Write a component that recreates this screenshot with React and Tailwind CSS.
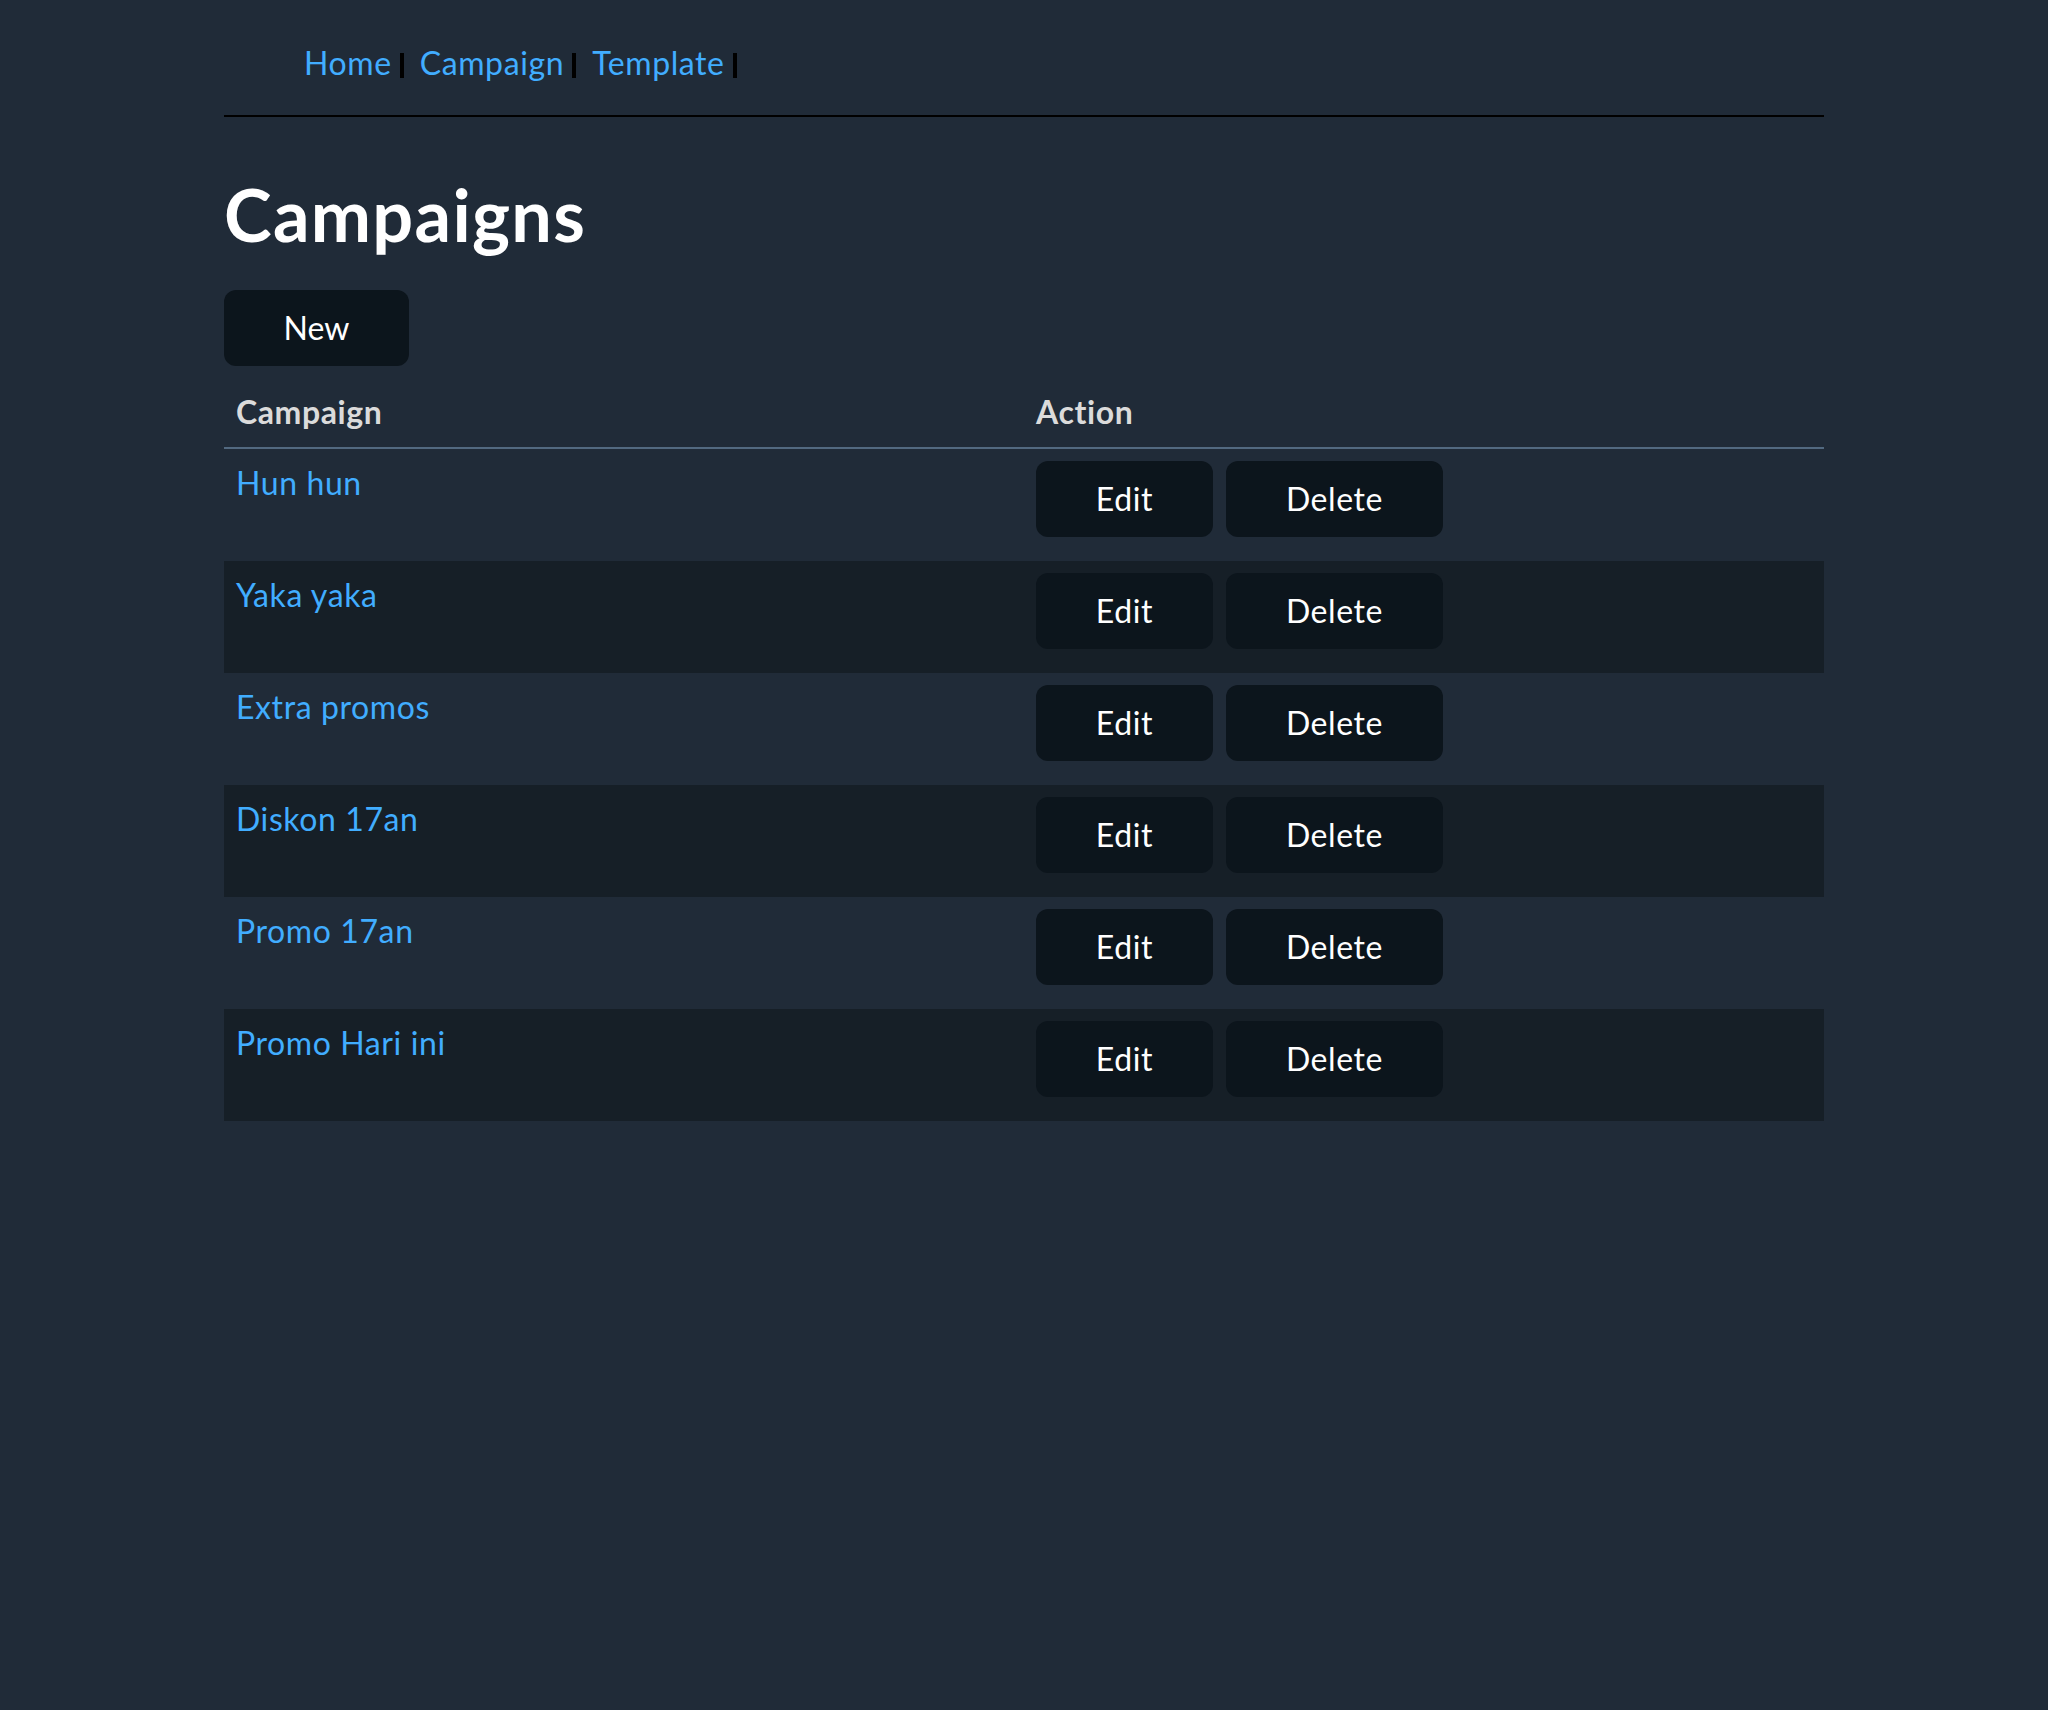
import React from "react"

const campaigns = ["Hun hun", "Yaka yaka", "Extra promos", "Diskon 17an", "Promo 17an", "Promo Hari ini"]

const btn =
  "inline-flex items-center justify-center h-[76px] rounded-[12px] bg-[#0c151c] text-white text-[32px] leading-[36px] align-top"

export default function App() {
  return (
    <div className="min-h-screen w-full bg-[#202b38] text-[#dbdbdb] font-['Lato',sans-serif]">
      <div className="mx-auto w-[1600px] pt-[40px]">
        <nav>
          <ul className="flex items-center pl-[80px] text-[32px] leading-[45px] tracking-[0.6px]">
            <li className="flex items-center">
              <a href="#" className="text-[#41adff]">Home</a>
              <span className="ml-[8px] mr-[16px] mt-[6px] inline-block h-[25px] w-[4px] bg-black" />
            </li>
            <li className="flex items-center">
              <a href="#" className="text-[#41adff]">Campaign</a>
              <span className="ml-[8px] mr-[16px] mt-[6px] inline-block h-[25px] w-[4px] bg-black" />
            </li>
            <li className="flex items-center">
              <a href="#" className="text-[#41adff]">Template</a>
              <span className="ml-[8px] mt-[6px] inline-block h-[25px] w-[4px] bg-black" />
            </li>
          </ul>
        </nav>
        <hr className="mt-[30px] h-[2px] border-0 bg-black" />

        <h1 className="mt-[54px] text-[72px] font-bold leading-[1.2] tracking-[1.3px] text-white">Campaigns</h1>

        <button type="button" className={`${btn} w-[185px] mt-[33px] mb-[12px]`}>
          New
        </button>

        <table className="w-full border-collapse text-[32px] leading-[44.8px] tracking-[0.6px]">
          <thead>
            <tr>
              <th className="w-1/2 border-b-2 border-[#526980] p-[12px] text-left font-bold text-[#dbdbdb]">Campaign</th>
              <th className="w-1/2 border-b-2 border-[#526980] p-[12px] text-left font-bold text-[#dbdbdb]">Action</th>
            </tr>
          </thead>
          <tbody>
            {campaigns.map((name, i) => (
              <tr key={name} className={i % 2 === 1 ? "bg-[#161f27]" : ""}>
                <td className="p-[12px] align-top">
                  <a href="#" className="text-[#41adff]">{name}</a>
                </td>
                <td className="p-[12px] pb-0 align-top">
                  <button type="button" className={`${btn} w-[177px] mr-[13px] mb-[24px]`}>
                    Edit
                  </button>
                  <button type="button" className={`${btn} w-[217px] mb-[24px]`}>
                    Delete
                  </button>
                </td>
              </tr>
            ))}
          </tbody>
        </table>
      </div>
    </div>
  )
}
